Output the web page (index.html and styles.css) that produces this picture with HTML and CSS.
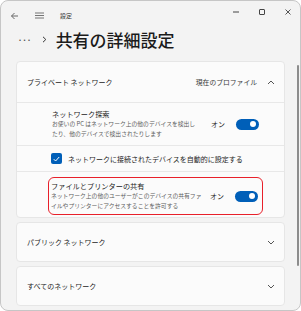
FILE: index.html
```html
<!DOCTYPE html>
<html lang="ja">
<head>
    <meta charset="UTF-8">
    <title>設定</title>
    <link rel="stylesheet" href="styles.css">
</head>
<body>
    <div class="window">
        <div class="titlebar">
            <svg class="tb-icon back" width="9" height="8" viewBox="0 0 9 8"><path d="M8 4H1.5M4.5 1L1.5 4l3 3" fill="none" stroke="#666" stroke-width="1"/></svg>
            <svg class="tb-icon menu" width="9" height="7" viewBox="0 0 9 7"><path d="M0 1h9M0 3.5h9M0 6h9" stroke="#666" stroke-width="0.9"/></svg>
            <span class="app-name">設定</span>
            <div class="caption">
                <svg width="8" height="8" viewBox="0 0 8 8"><path d="M1 4h6" stroke="#444" stroke-width="1"/></svg>
                <svg width="8" height="8" viewBox="0 0 8 8"><rect x="1.5" y="1.5" width="5" height="5" rx="0.5" fill="none" stroke="#444" stroke-width="1"/></svg>
                <svg width="8" height="8" viewBox="0 0 8 8"><path d="M1.5 1.5l5 5M6.5 1.5l-5 5" stroke="#444" stroke-width="0.9"/></svg>
            </div>
        </div>

        <div class="crumbs">
            <span class="dots">•••</span>
            <svg class="crumb-sep" width="5" height="7" viewBox="0 0 5 7"><path d="M1 0.8L3.8 3.5 1 6.2" fill="none" stroke="#333" stroke-width="1"/></svg>
            <h1>共有の詳細設定</h1>
        </div>

        <div class="content">
            <div class="card">
                <div class="card-head">
                    <span class="head-title">プライベート ネットワーク</span>
                    <span class="head-note">現在のプロファイル</span>
                    <svg class="chev" width="8" height="5" viewBox="0 0 8 5"><path d="M1 4L4 1l3 3" fill="none" stroke="#555" stroke-width="1"/></svg>
                </div>

                <div class="row">
                    <div class="item">
                        <div class="item-text">
                            <div class="item-title">ネットワーク探索</div>
                            <div class="item-desc">お使いの PC はネットワーク上の他のデバイスを検出し<br>たり、他のデバイスで検出されたりします</div>
                        </div>
                        <span class="state">オン</span>
                        <span class="toggle"></span>
                    </div>
                </div>

                <div class="row row-check">
                    <div class="item">
                        <span class="checkbox">
                            <svg width="7" height="6" viewBox="0 0 7 6"><path d="M0.8 3.2l1.8 1.8L6.2 1" fill="none" stroke="#fff" stroke-width="1"/></svg>
                        </span>
                        <span class="check-label">ネットワークに接続されたデバイスを自動的に設定する</span>
                    </div>
                </div>

                <div class="row row-last">
                    <div class="item marked">
                        <div class="item-text">
                            <div class="item-title">ファイルとプリンターの共有</div>
                            <div class="item-desc">ネットワーク上の他のユーザーがこのデバイスの共有ファ<br>イルやプリンターにアクセスすることを許可する</div>
                        </div>
                        <span class="state">オン</span>
                        <span class="toggle"></span>
                    </div>
                </div>
            </div>

            <div class="card card-closed">
                <span class="head-title">パブリック ネットワーク</span>
                <svg class="chev" width="8" height="5" viewBox="0 0 8 5"><path d="M1 1l3 3 3-3" fill="none" stroke="#555" stroke-width="1"/></svg>
            </div>

            <div class="card card-closed">
                <span class="head-title">すべてのネットワーク</span>
                <svg class="chev" width="8" height="5" viewBox="0 0 8 5"><path d="M1 1l3 3 3-3" fill="none" stroke="#555" stroke-width="1"/></svg>
            </div>
        </div>

        <div class="scroll-thumb"></div>
    </div>
</body>
</html>
```

FILE: styles.css
```css
body {
    margin: 0;
    font-family: "Noto Sans CJK JP", "Noto Sans", sans-serif;
    color: #1b1b1b;
    background: #fff;
}

.window {
    position: relative;
    width: 301px;
    height: 311px;
    box-sizing: border-box;
    border: 1px solid #c6c6c6;
    border-radius: 8px;
    background: #f3f3f3;
    overflow: hidden;
}

.titlebar {
    display: flex;
    align-items: center;
    height: 29px;
    padding-left: 9px;
}

.tb-icon.menu {
    margin-left: 16px;
}

.app-name {
    margin-left: 16px;
    font-size: 6px;
    color: #333;
}

.caption {
    display: flex;
    gap: 18px;
    margin-left: auto;
    margin-right: 8px;
    align-self: flex-start;
    margin-top: 7px;
}

.crumbs {
    display: flex;
    align-items: center;
    height: 18px;
    padding-left: 18px;
}

.dots {
    font-size: 6px;
    letter-spacing: 2.5px;
    color: #555;
}

.crumb-sep {
    margin-left: 9px;
}

h1 {
    margin: 0 0 0 9px;
    font-size: 17px;
    font-weight: 500;
    color: #1b1b1b;
}

.content {
    display: flex;
    flex-direction: column;
    gap: 4px;
    margin: 13px 15px 0 15px;
}

.card {
    background: #fbfbfb;
    border: 1px solid #e6e6e6;
    border-radius: 4px;
}

.card-head, .card-closed {
    display: flex;
    align-items: center;
    height: 40px;
    padding: 0 9px 0 10px;
}

.card-closed {
    height: 38px;
}

.head-title {
    font-size: 7px;
    color: #1b1b1b;
}

.head-note {
    margin-left: auto;
    margin-right: 10px;
    font-size: 6.8px;
    color: #3a3a3a;
}

.card-closed .chev {
    margin-left: auto;
}

.row {
    border-top: 1px solid #e8e8e8;
    padding: 0 21px 0 31px;
}

.item {
    display: flex;
    align-items: center;
    padding: 0 4px;
}

.row:nth-child(2) .item {
    height: 42px;
}

.item-text {
    flex: 1;
}

.item-title {
    font-size: 7.2px;
    line-height: 10px;
}

.item-desc {
    font-size: 5.8px;
    line-height: 10.5px;
    color: #5d5d5d;
}

.state {
    font-size: 7px;
    margin-right: 11px;
}

.toggle {
    position: relative;
    width: 23px;
    height: 11px;
    border-radius: 6px;
    background: #005fb8;
}

.toggle::after {
    content: "";
    position: absolute;
    right: 3px;
    top: 2.5px;
    width: 6px;
    height: 6px;
    border-radius: 50%;
    background: #fff;
}

.row-check .item {
    height: 25px;
    padding-left: 3px;
}

.checkbox {
    display: flex;
    align-items: center;
    justify-content: center;
    width: 11px;
    height: 11px;
    border-radius: 2px;
    background: #005fb8;
}

.check-label {
    margin-left: 6px;
    font-size: 7px;
}

.row-last {
    padding-top: 5px;
    padding-bottom: 2px;
}

.marked {
    height: 36px;
    border: 1.5px solid #e8202a;
    border-radius: 6px;
    padding: 0 4px 0 2px;
}

.scroll-thumb {
    position: absolute;
    right: 1px;
    top: 64px;
    width: 2px;
    height: 201px;
    border-radius: 1px;
    background: #8c8c8c;
}
```
